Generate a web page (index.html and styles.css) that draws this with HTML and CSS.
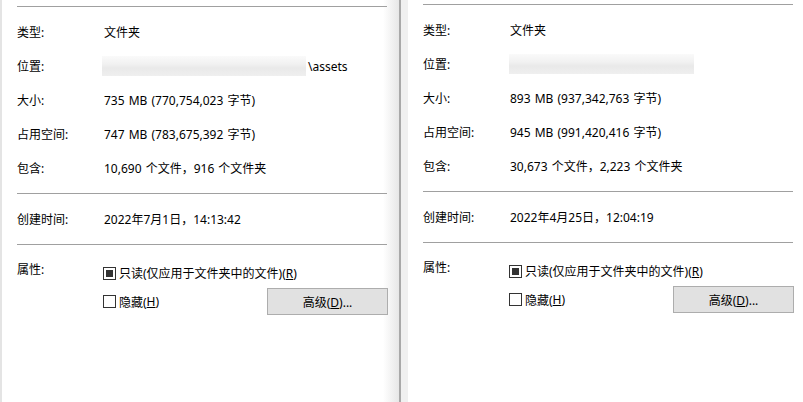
FILE: index.html
```html
<!DOCTYPE html>
<html lang="zh-CN">
<head>
  <meta charset="UTF-8">
  <title>属性</title>
  <link rel="stylesheet" href="styles.css">
</head>
<body>
  <div class="screen">
    <!-- Left dialog -->
    <section class="props props-left">
      <hr class="rule">
      <div class="group">
        <div class="row"><span class="label">类型:</span><span class="value">文件夹</span></div>
        <div class="row"><span class="label">位置:</span><span class="value"><span class="blur blur-left"></span>\assets</span></div>
        <div class="row"><span class="label">大小:</span><span class="value">735 MB (770,754,023 字节)</span></div>
        <div class="row"><span class="label">占用空间:</span><span class="value">747 MB (783,675,392 字节)</span></div>
        <div class="row"><span class="label">包含:</span><span class="value">10,690 个文件，916 个文件夹</span></div>
      </div>
      <hr class="rule">
      <div class="group">
        <div class="row"><span class="label">创建时间:</span><span class="value">2022年7月1日，14:13:42</span></div>
      </div>
      <hr class="rule">
      <div class="attrs">
        <span class="label attr-label">属性:</span>
        <div class="attr-values">
          <label class="check"><span class="box box-mixed"></span>只读(仅应用于文件夹中的文件)(<u>R</u>)</label>
          <div class="attr-row">
            <label class="check"><span class="box"></span>隐藏(<u>H</u>)</label>
            <button class="btn">高级(<u>D</u>)...</button>
          </div>
        </div>
      </div>
    </section>

    <div class="seam"></div>

    <!-- Right dialog -->
    <section class="props props-right">
      <hr class="rule">
      <div class="group">
        <div class="row"><span class="label">类型:</span><span class="value">文件夹</span></div>
        <div class="row"><span class="label">位置:</span><span class="value"><span class="blur blur-right"></span></span></div>
        <div class="row"><span class="label">大小:</span><span class="value">893 MB (937,342,763 字节)</span></div>
        <div class="row"><span class="label">占用空间:</span><span class="value">945 MB (991,420,416 字节)</span></div>
        <div class="row"><span class="label">包含:</span><span class="value">30,673 个文件，2,223 个文件夹</span></div>
      </div>
      <hr class="rule">
      <div class="group">
        <div class="row"><span class="label">创建时间:</span><span class="value">2022年4月25日，12:04:19</span></div>
      </div>
      <hr class="rule">
      <div class="attrs">
        <span class="label attr-label">属性:</span>
        <div class="attr-values">
          <label class="check"><span class="box box-mixed"></span>只读(仅应用于文件夹中的文件)(<u>R</u>)</label>
          <div class="attr-row">
            <label class="check"><span class="box"></span>隐藏(<u>H</u>)</label>
            <button class="btn">高级(<u>D</u>)...</button>
          </div>
        </div>
      </div>
    </section>
  </div>
</body>
</html>
```

FILE: styles.css
```css
/* Base */
body {
  margin: 0;
  font-family: "Noto Sans", "Noto Sans CJK SC", sans-serif;
  font-size: 12px;
  color: #000;
  background: #fff;
  overflow: hidden;
}
.screen {
  display: flex;
  height: 402px;
}

/* Dialog panels */
.props {
  box-sizing: border-box;
  padding-left: 15px;
}
.props-left {
  width: 399px;
  border-left: 2px solid #e4e4e4;
  padding-top: 6px;
  background: linear-gradient(to right, #fff 381px, #e7e7e7 397px);
}
.props-right {
  flex: 1;
  padding-top: 4px;
}
.seam {
  width: 7px;
  border-left: 2px solid #a9a9a9;
  background: #f0f0f0;
}

.rule {
  width: 370px;
  margin: 0;
  border: none;
  border-top: 1px solid #a0a0a0;
}
.group { padding: 8px 0 8px; width: 370px; }
.row {
  display: flex;
  align-items: center;
  height: 34px;
}
.label { width: 87px; flex: none; }
.value { display: flex; align-items: center; white-space: pre; word-spacing: 1px; }

/* Blurred path */
.blur {
  display: inline-block;
  height: 20px;
  background: linear-gradient(to bottom, #fafafa 0, #f1f1f1 40%, #e9e9e9 60%, #efefef 100%);
}
.blur-left { width: 204px; margin-left: -2px; margin-right: 2px; }
.blur-right { width: 185px; margin-left: -1px; }

/* Attributes */
.attrs {
  display: flex;
  width: 371px;
  padding-top: 14px;
}
.attr-label { line-height: 22px; }
.attr-values {
  flex: 1;
  padding-top: 3px;
  margin-left: -1px;
}
.check {
  display: flex;
  align-items: center;
  height: 22px;
  white-space: nowrap;
}
.box {
  box-sizing: border-box;
  width: 13px;
  height: 13px;
  border: 1px solid #333;
  background: #fff;
  margin-right: 3px;
  position: relative;
}
.box-mixed::after {
  content: "";
  position: absolute;
  left: 2px;
  top: 2px;
  width: 7px;
  height: 7px;
  background: #333;
}
.attr-row {
  display: flex;
  justify-content: space-between;
  align-items: center;
  margin-top: 4px;
}
.btn {
  width: 121px;
  height: 27px;
  font: inherit;
  color: #000;
  background: #e1e1e1;
  border: 1px solid #adadad;
  padding: 0;
}
u { text-underline-offset: 1px; }
```
